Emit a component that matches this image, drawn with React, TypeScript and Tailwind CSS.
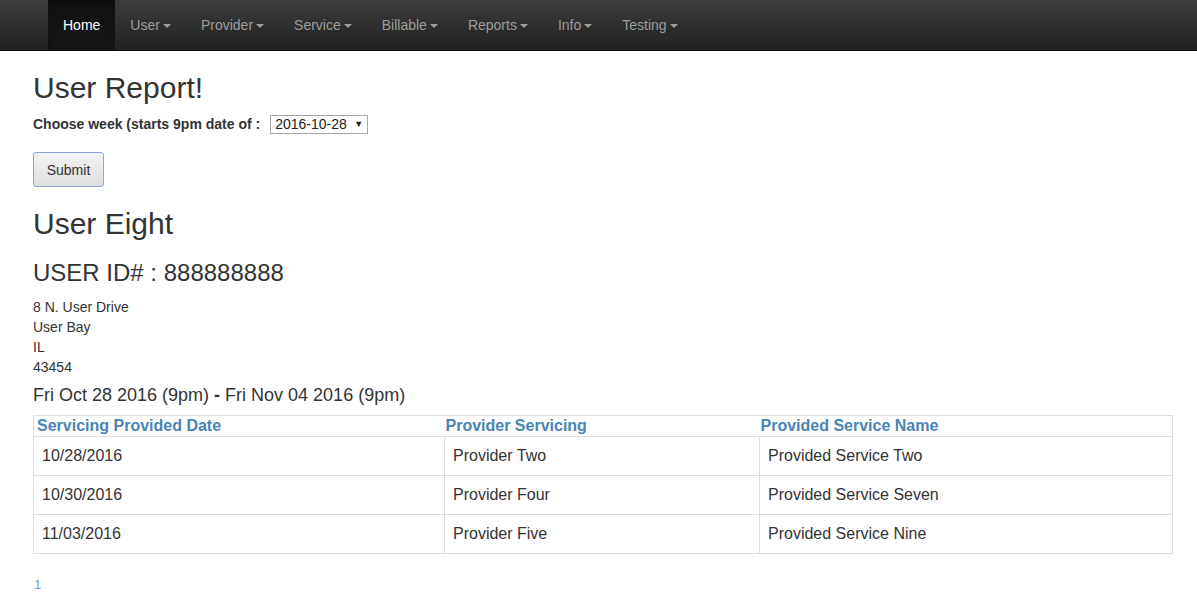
const navItems = ['User', 'Provider', 'Service', 'Billable', 'Reports', 'Info', 'Testing'];

const rows = [
  { date: '10/28/2016', provider: 'Provider Two', service: 'Provided Service Two' },
  { date: '10/30/2016', provider: 'Provider Four', service: 'Provided Service Seven' },
  { date: '11/03/2016', provider: 'Provider Five', service: 'Provided Service Nine' },
];

function Caret() {
  return (
    <span className="ml-[3px] inline-block h-0 w-0 border-x-[4px] border-t-[4px] border-x-transparent border-t-current align-middle" />
  );
}

function Navbar() {
  return (
    <nav className="h-[51px] border-b border-[#080808] bg-gradient-to-b from-[#3c3c3c] to-[#222222]">
      <ul className="flex pl-[48px]">
        <li>
          <a className="block bg-gradient-to-b from-[#101010] to-[#181818] px-[15px] py-[15px] text-[14px] leading-[20px] text-white shadow-[inset_0_3px_9px_rgba(0,0,0,0.25)]">
            Home
          </a>
        </li>
        {navItems.map((item) => (
          <li key={item}>
            <a className="block px-[15px] py-[15px] text-[14px] leading-[20px] text-[#9d9d9d]">
              {item}
              <Caret />
            </a>
          </li>
        ))}
      </ul>
    </nav>
  );
}

export default function App() {
  return (
    <div className="min-h-[616px] bg-white font-['Liberation_Sans',Arial,sans-serif] text-[14px] leading-[20px] text-[#333333]">
      <Navbar />
      <main className="pl-[33px] pr-[25px]">
        <h1 className="mt-[20px] mb-[10px] text-[30px] leading-[33px]">User Report!</h1>
        <form>
          <div className="flex items-center">
            <label className="font-bold">Choose week (starts 9pm date of :</label>
            <div className="relative ml-[10px]">
              <select
                defaultValue="2016-10-28"
                className="block h-[19px] w-[98px] appearance-none rounded-none border border-[#a6a6a6] bg-white pl-[4px] text-[14px] leading-[17px] text-[#222]"
              >
                <option>2016-10-28</option>
              </select>
              <span className="pointer-events-none absolute right-[5px] top-[3px] text-[9px] leading-[12px] text-[#222]">▼</span>
            </div>
          </div>
          <button
            type="button"
            className="mt-[18px] h-[35px] w-[71px] rounded-[3px] border border-[#8aa6d6] bg-gradient-to-b from-[#f3f3f3] to-[#dedede] text-[14px] text-[#333]"
          >
            Submit
          </button>
        </form>

        <h1 className="mt-[20px] mb-[20px] text-[30px] leading-[33px]">User Eight</h1>
        <h3 className="mb-[11px] text-[24px] leading-[26px]">USER ID# : 888888888</h3>
        <address className="not-italic">
          <div>8 N. User Drive</div>
          <div>User Bay</div>
          <div>IL</div>
          <div>43454</div>
        </address>
        <h4 className="mt-[8px] mb-[10px] text-[18px] leading-[20px]">
          Fri Oct 28 2016 (9pm) <b>-</b> Fri Nov 04 2016 (9pm)
        </h4>

        <table className="w-[1139px] table-fixed border-collapse border border-[#dddddd]">
          <colgroup>
            <col className="w-[411px]" />
            <col className="w-[315px]" />
            <col className="w-[413px]" />
          </colgroup>
          <thead>
            <tr className="border-b border-[#dddddd] text-left text-[16px] font-bold leading-[20px] text-[#4a84b4]">
              <th className="pl-[3px]">Servicing Provided Date</th>
              <th className="pl-[1px]">Provider Servicing</th>
              <th className="pl-[1px]">Provided Service Name</th>
            </tr>
          </thead>
          <tbody className="text-[16px] leading-[22px]">
            {rows.map((row) => (
              <tr key={row.date}>
                <td className="border border-[#dddddd] px-[8px] py-[8px]">{row.date}</td>
                <td className="border border-[#dddddd] px-[8px] py-[8px]">{row.provider}</td>
                <td className="border border-[#dddddd] px-[8px] py-[8px]">{row.service}</td>
              </tr>
            ))}
          </tbody>
        </table>

        <div className="mt-[22px] pl-[1px] text-[13px] leading-[18px] text-[#6f9fcf]">1</div>
      </main>
    </div>
  );
}
